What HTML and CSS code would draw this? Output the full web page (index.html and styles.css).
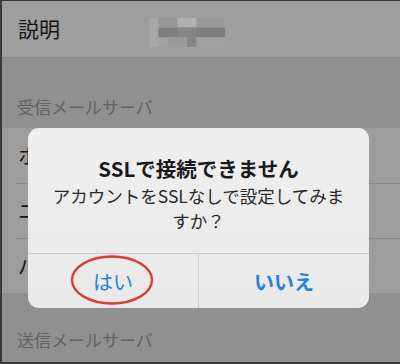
FILE: index.html
```html
<!doctype html>
<html lang="ja">
<head>
    <meta charset="UTF-8">
    <meta name="viewport" content="width=device-width, initial-scale=1.0">
    <title>アカウント設定</title>
    <link rel="stylesheet" href="styles.css">
</head>
<body>
<div class="screen">
    <div class="row top">
        <span class="label">説明</span>
        <svg class="mosaic" width="76" height="29" viewBox="0 0 8 3" preserveAspectRatio="none">
            <rect x="0" y="0" width="8" height="3" fill="#a2a2a2"/>
            <rect x="1" y="0" width="2" height="1" fill="#969696"/>
            <rect x="3" y="0" width="2" height="1" fill="#b0b0b0"/>
            <rect x="5" y="0" width="3" height="1" fill="#9a9a9a"/>
            <rect x="0" y="0" width="1" height="3" fill="#a6a6a6"/>
            <rect x="1" y="1" width="7" height="1" fill="#7e7e7e"/>
            <rect x="3" y="1" width="2" height="1" fill="#858585"/>
            <rect x="2" y="2" width="2" height="1" fill="#9a9a9a"/>
            <rect x="4" y="2" width="1" height="1" fill="#858585"/>
            <rect x="5" y="2" width="3" height="1" fill="#a0a0a0"/>
        </svg>
    </div>
    <div class="section"><span>受信メールサーバ</span></div>
    <div class="group">
        <div class="row"><span class="label">ホ</span></div>
        <div class="row"><span class="label">ニ</span></div>
        <div class="row"><span class="label">パ</span></div>
    </div>
    <div class="section bottom"><span>送信メールサーバ</span></div>

    <div class="alert">
        <div class="alert-body">
            <h2>SSLで接続できません</h2>
            <p>アカウントをSSLなしで設定してみま<br>すか？</p>
        </div>
        <div class="alert-buttons">
            <div class="btn yes">はい
                <svg class="circle" width="86" height="52" viewBox="0 0 86 52">
                    <ellipse cx="43" cy="26" rx="40" ry="23.5" fill="none" stroke="#d8402e" stroke-width="2.4"/>
                </svg>
            </div>
            <div class="btn no">いいえ</div>
        </div>
    </div>
</div>
</body>
</html>
```

FILE: styles.css
```css
html, body {
    margin: 0;
    background: #3a3a3a;
}
body {
    font-family: "Noto Sans CJK JP", "Noto Sans", sans-serif;
}
.screen {
    position: relative;
    width: 398px;
    height: 361px;
    margin-left: 2px;
    margin-top: 1px;
    overflow: hidden;
    background: #909090;
}
.row {
    display: flex;
    align-items: center;
    height: 55px;
    padding-left: 16px;
    position: relative;
}
.row .label {
    font-size: 20px;
    color: #161616;
}
.row.top {
    height: 56px;
    background: #9e9e9e;
    border-bottom: 1px solid #8a8a8a;
}
.row.top .label {
    font-size: 21px;
    margin-top: -2px;
}
.mosaic {
    align-self: flex-start;
    margin-left: 89px;
    margin-top: 17px;
}
.section {
    height: 70px;
    display: flex;
    align-items: flex-end;
    padding-left: 15px;
    font-size: 17px;
    color: #636363;
}
.section span {
    margin-bottom: 9px;
}
.section.bottom {
    height: 60px;
}
.section.bottom span {
    margin-bottom: 1px;
}
.group {
    background: #9d9d9d;
}
.group .row + .row::before {
    content: "";
    position: absolute;
    left: 14px;
    right: 0;
    top: 0;
    border-top: 1px solid #8c8c8c;
}
.alert {
    position: absolute;
    left: 26px;
    top: 127px;
    width: 341px;
    height: 180px;
    border-radius: 11px;
    background: linear-gradient(#efefef, #e9e9e9);
    overflow: hidden;
    display: flex;
    flex-direction: column;
}
.alert-body {
    height: 125px;
    text-align: center;
    color: #1a1a1a;
}
.alert-body h2 {
    margin: 26px 0 0 0;
    font-size: 20.5px;
    font-weight: bold;
    line-height: 29px;
}
.alert-body p {
    margin: 0;
    font-size: 17.5px;
    line-height: 25px;
    color: #2a2a2a;
}
.alert-buttons {
    flex: 1;
    display: flex;
    border-top: 1px solid #c9c9c9;
}
.btn {
    flex: 1;
    display: flex;
    align-items: center;
    justify-content: center;
    font-size: 20px;
    color: #2b80d8;
    position: relative;
}
.btn.yes {
    border-right: 1px solid #cdcdcd;
}
.btn.no {
    font-weight: bold;
}
.circle {
    position: absolute;
    left: 41px;
    top: 0;
}
```
